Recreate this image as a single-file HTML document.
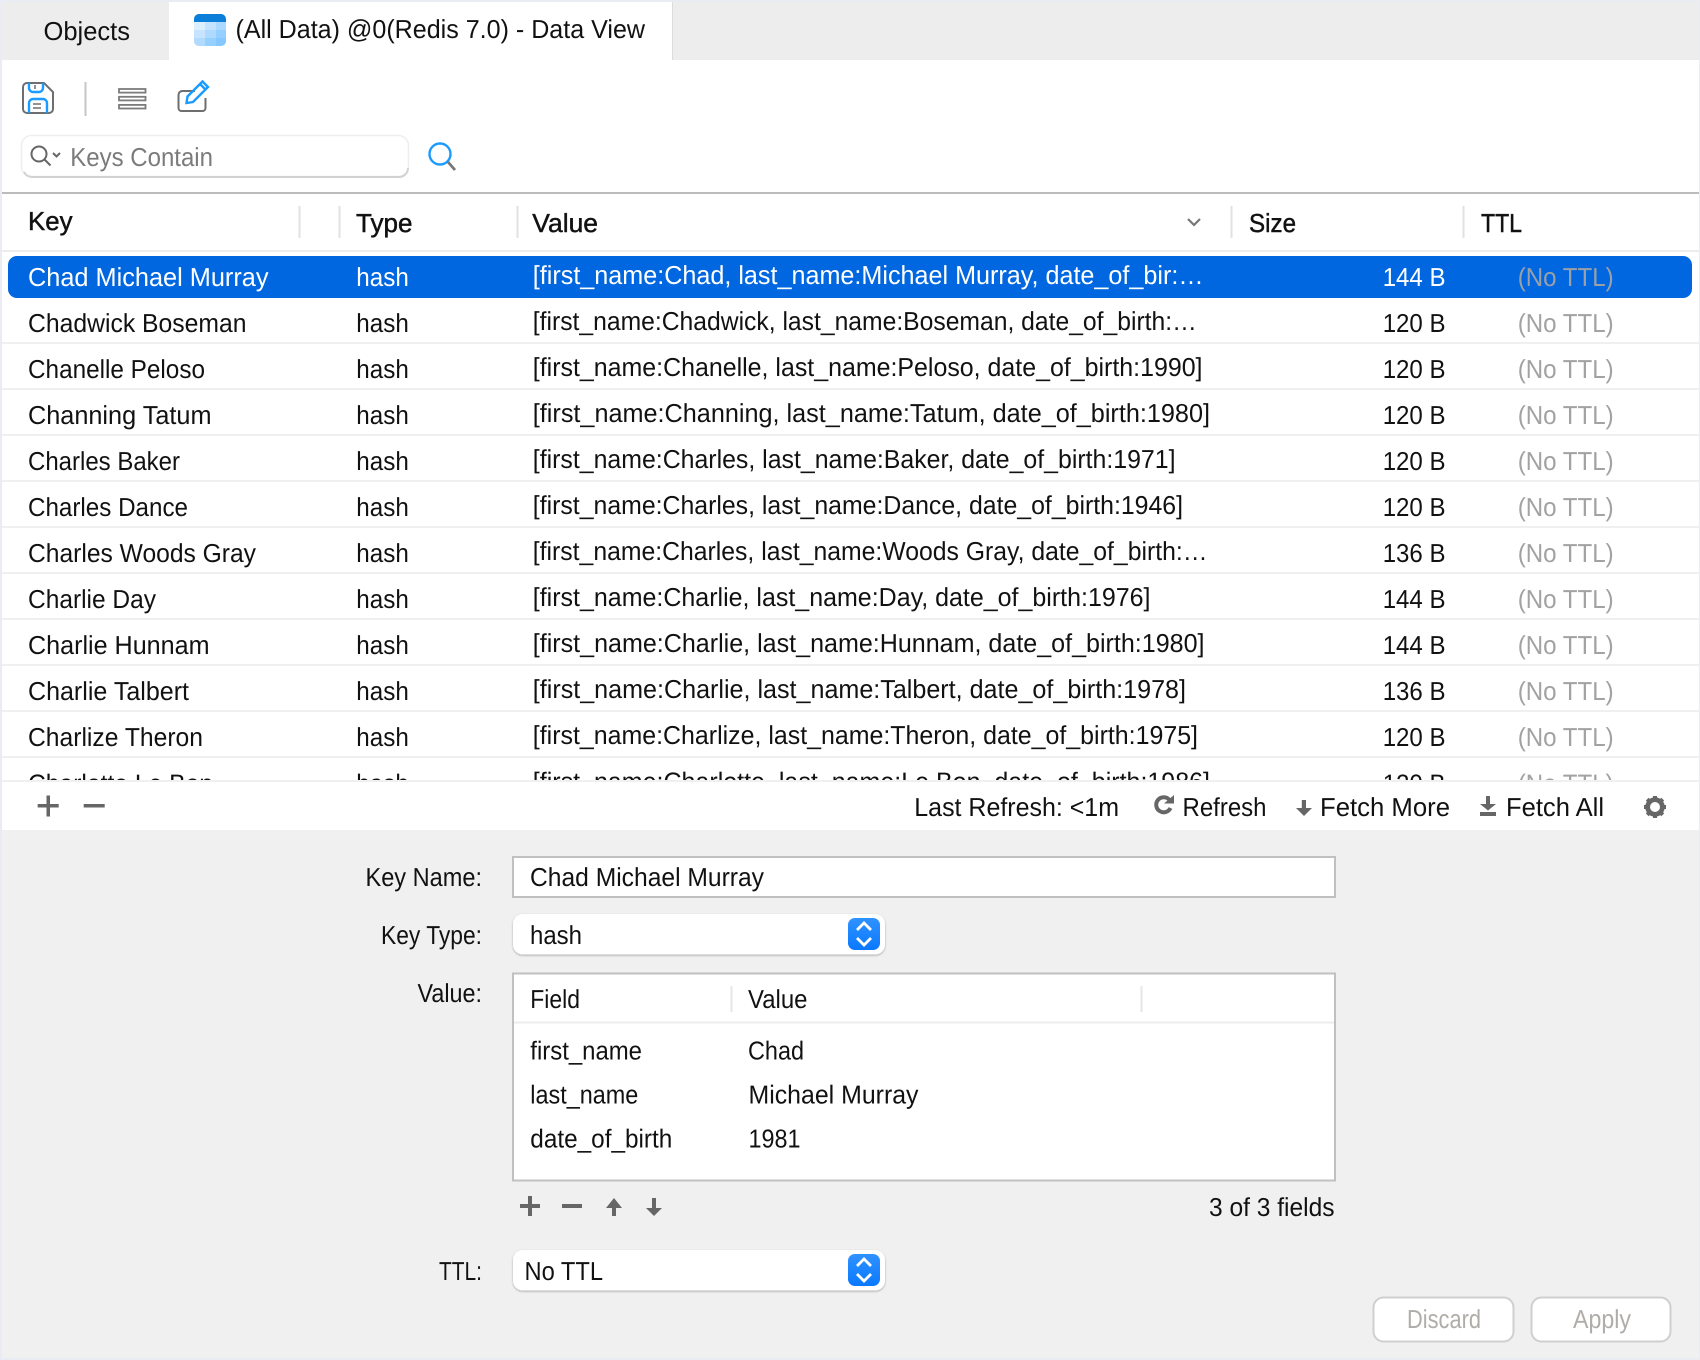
<!DOCTYPE html>
<html lang="en"><head><meta charset="utf-8"><title>Data View</title>
<style>
html,body{margin:0;padding:0;background:#fff;width:1700px;height:1360px;overflow:hidden}
svg{display:block;position:absolute;left:0;top:0}
text{font-family:"Liberation Sans",sans-serif;font-size:26px;fill:#111;white-space:pre;text-rendering:geometricPrecision}
.h{stroke:#111;stroke-width:.45px}
.w{fill:#fff}
.g{fill:#a2a2a2}
.d{fill:#b0aca8}
.i{fill:#666}
.s{fill:none;stroke:#6e6e6e}
.b{fill:none;stroke:#1a9bff}
</style></head><body>
<svg width="1700" height="1360" viewBox="0 0 1700 1360" xmlns="http://www.w3.org/2000/svg">
<defs>
<clipPath id="tb"><rect x="0" y="252" width="1700" height="528"/></clipPath>
<linearGradient id="st" x1="0" y1="0" x2="0" y2="1"><stop offset="0" stop-color="#2f92ff"/><stop offset="1" stop-color="#0a78ff"/></linearGradient>
<filter id="sh" x="-5%" y="-20%" width="110%" height="140%"><feDropShadow dx="0" dy="1" stdDeviation="1" flood-color="#000" flood-opacity=".3"/></filter>
</defs>
<!-- backgrounds -->
<rect width="1700" height="1360" fill="#e9edf3"/>
<rect x="2" y="2" width="1697" height="58" fill="#ededed"/>
<rect x="2" y="60" width="1697" height="770" fill="#fff"/>
<rect x="2" y="830" width="1697" height="528" fill="#f0f0f0"/>
<!-- tabs -->
<rect x="169" y="2" width="503" height="58" fill="#fff"/>
<rect x="672" y="2" width="1" height="58" fill="#dcdcdc"/>
<text x="43.5" y="40" textLength="86.5" lengthAdjust="spacingAndGlyphs">Objects</text>
<g>
<rect x="194" y="14" width="32" height="32" rx="5" fill="#a9d8ff"/>
<path d="M194 22v-3a5 5 0 0 1 5-5h22a5 5 0 0 1 5 5v3z" fill="#0b7fd8"/>
<rect x="194" y="22" width="11" height="8" fill="#dcefff"/><rect x="205" y="22" width="11" height="8" fill="#c4e3ff"/><rect x="216" y="22" width="10" height="8" fill="#acd9ff"/>
<rect x="194" y="30" width="11" height="8" fill="#c6e4ff"/><rect x="205" y="30" width="11" height="8" fill="#aedaff"/><rect x="216" y="30" width="10" height="8" fill="#95cfff"/>
<path d="M194 38h11v8h-6a5 5 0 0 1-5-5z" fill="#b0dbff"/><rect x="205" y="38" width="11" height="8" fill="#96d0ff"/><path d="M216 38h10v3a5 5 0 0 1-5 5h-5z" fill="#84c8ff"/>
</g>
<text x="235.5" y="38" textLength="409.5" lengthAdjust="spacingAndGlyphs">(All Data) @0(Redis 7.0) - Data View</text>
<!-- toolbar -->
<path class="s" stroke-width="2" d="M27 83h17l9 9v17a4 4 0 0 1-4 4H27a4 4 0 0 1-4-4V87a4 4 0 0 1 4-4z"/>
<path class="b" stroke-width="2.4" d="M29 83v5a4 4 0 0 0 4 4h6a4 4 0 0 0 4-4v-5M29 113V103a4 4 0 0 1 4-4h10a4 4 0 0 1 4 4v10"/>
<path class="s" stroke-width="1.5" d="M35 85v4M33 104h8M33 108h8"/>
<rect x="84.5" y="82" width="2" height="34" fill="#c6c6c6"/>
<g fill="none" stroke="#7c7c7c" stroke-width="1.8"><rect x="119" y="89" width="26.5" height="3.6"/><rect x="119" y="96.8" width="26.5" height="3.6"/><rect x="119" y="104.9" width="26.5" height="3.6"/></g>
<path class="s" stroke-width="2" d="M195 91h-13a4 4 0 0 0-3.500 4v13a3 3 0 0 0 3 3h21a3 3 0 0 0 3-3V98"/>
<path class="b" stroke-width="2.4" d="M186.500 103l1-6.500 15-15 5.500 5.500-15 15zM200 84l5.500 5.500"/>
<!-- search -->
<rect x="21.5" y="135.5" width="387" height="41" rx="10" fill="#fff" stroke="#eee" stroke-width="1.5"/>
<path d="M24 172a9 9 0 0 0 8 5h367a9 9 0 0 0 9-9" fill="none" stroke="#d2d2d2" stroke-width="2"/>
<circle cx="39" cy="154" r="7.5" fill="none" stroke="#666" stroke-width="2"/>
<path d="M44.500 159.500l6 6M53 153l3.500 3.500 3.500-3.500" fill="none" stroke="#666" stroke-width="2"/>
<text x="70.3" y="166" textLength="142.7" lengthAdjust="spacingAndGlyphs" style="fill:#7b7b7b">Keys Contain</text>
<circle cx="440" cy="154" r="10.5" class="b" stroke-width="2.4"/>
<path d="M448 162l7 8" stroke="#777" stroke-width="2.8" fill="none"/>
<!-- table header -->
<rect x="2" y="192" width="1697" height="2" fill="#bcbcbc"/>
<g fill="#e2e2e2"><rect x="298.500" y="206" width="2" height="32"/><rect x="338.500" y="206" width="2" height="32"/><rect x="516.500" y="206" width="2" height="32"/><rect x="1230.500" y="206" width="2" height="32"/><rect x="1462.500" y="206" width="2" height="32"/></g>
<rect x="2" y="250" width="1697" height="2" fill="#ececec"/>
<text class="h" x="28" y="230" textLength="44.5" lengthAdjust="spacingAndGlyphs">Key</text>
<text class="h" x="356" y="232" textLength="56.5" lengthAdjust="spacingAndGlyphs">Type</text>
<text class="h" x="532.3" y="232" textLength="65.7" lengthAdjust="spacingAndGlyphs">Value</text>
<text class="h" x="1249" y="232" textLength="47" lengthAdjust="spacingAndGlyphs">Size</text>
<text class="h" x="1481" y="232" textLength="41" lengthAdjust="spacingAndGlyphs">TTL</text>
<path d="M1188 219l6 6 6-6" fill="none" stroke="#777" stroke-width="2.2"/>
<!-- rows -->
<g fill="#f0f0f0"><rect x="2" y="342" width="1697" height="2"/><rect x="2" y="388" width="1697" height="2"/><rect x="2" y="434" width="1697" height="2"/><rect x="2" y="480" width="1697" height="2"/><rect x="2" y="526" width="1697" height="2"/><rect x="2" y="572" width="1697" height="2"/><rect x="2" y="618" width="1697" height="2"/><rect x="2" y="664" width="1697" height="2"/><rect x="2" y="710" width="1697" height="2"/><rect x="2" y="756" width="1697" height="2"/></g>
<rect x="8" y="256" width="1684" height="42" rx="9" fill="#0067e0"/>
<g clip-path="url(#tb)">
<text class="w" x="28" y="286" textLength="240.5" lengthAdjust="spacingAndGlyphs">Chad Michael Murray</text>
<text class="w" x="356.3" y="286" textLength="52.5" lengthAdjust="spacingAndGlyphs">hash</text>
<text class="w" x="532.8" y="284" textLength="670.7" lengthAdjust="spacingAndGlyphs">[first_name:Chad, last_name:Michael Murray, date_of_bir:…</text>
<text class="w" x="1382.7" y="286" textLength="62.8" lengthAdjust="spacingAndGlyphs">144 B</text>
<text x="1517.7" y="286" textLength="96" lengthAdjust="spacingAndGlyphs" style="fill:#9aa0a8">(No TTL)</text>

<text x="28" y="332" textLength="218.5" lengthAdjust="spacingAndGlyphs">Chadwick Boseman</text>
<text x="356.3" y="332" textLength="52.5" lengthAdjust="spacingAndGlyphs">hash</text>
<text x="532.8" y="330" textLength="664" lengthAdjust="spacingAndGlyphs">[first_name:Chadwick, last_name:Boseman, date_of_birth:…</text>
<text x="1382.7" y="332" textLength="62.8" lengthAdjust="spacingAndGlyphs">120 B</text>
<text class="g" x="1517.7" y="332" textLength="96" lengthAdjust="spacingAndGlyphs">(No TTL)</text>

<text x="28" y="378" textLength="177" lengthAdjust="spacingAndGlyphs">Chanelle Peloso</text>
<text x="356.3" y="378" textLength="52.5" lengthAdjust="spacingAndGlyphs">hash</text>
<text x="532.8" y="376" textLength="669.7" lengthAdjust="spacingAndGlyphs">[first_name:Chanelle, last_name:Peloso, date_of_birth:1990]</text>
<text x="1382.7" y="378" textLength="62.8" lengthAdjust="spacingAndGlyphs">120 B</text>
<text class="g" x="1517.7" y="378" textLength="96" lengthAdjust="spacingAndGlyphs">(No TTL)</text>

<text x="28" y="424" textLength="183.500" lengthAdjust="spacingAndGlyphs">Channing Tatum</text>
<text x="356.3" y="424" textLength="52.5" lengthAdjust="spacingAndGlyphs">hash</text>
<text x="532.8" y="422" textLength="677.2" lengthAdjust="spacingAndGlyphs">[first_name:Channing, last_name:Tatum, date_of_birth:1980]</text>
<text x="1382.7" y="424" textLength="62.8" lengthAdjust="spacingAndGlyphs">120 B</text>
<text class="g" x="1517.7" y="424" textLength="96" lengthAdjust="spacingAndGlyphs">(No TTL)</text>

<text x="28" y="470" textLength="152" lengthAdjust="spacingAndGlyphs">Charles Baker</text>
<text x="356.3" y="470" textLength="52.5" lengthAdjust="spacingAndGlyphs">hash</text>
<text x="532.8" y="468" textLength="642.7" lengthAdjust="spacingAndGlyphs">[first_name:Charles, last_name:Baker, date_of_birth:1971]</text>
<text x="1382.7" y="470" textLength="62.8" lengthAdjust="spacingAndGlyphs">120 B</text>
<text class="g" x="1517.7" y="470" textLength="96" lengthAdjust="spacingAndGlyphs">(No TTL)</text>

<text x="28" y="516" textLength="160" lengthAdjust="spacingAndGlyphs">Charles Dance</text>
<text x="356.3" y="516" textLength="52.5" lengthAdjust="spacingAndGlyphs">hash</text>
<text x="532.8" y="514" textLength="650.2" lengthAdjust="spacingAndGlyphs">[first_name:Charles, last_name:Dance, date_of_birth:1946]</text>
<text x="1382.7" y="516" textLength="62.8" lengthAdjust="spacingAndGlyphs">120 B</text>
<text class="g" x="1517.7" y="516" textLength="96" lengthAdjust="spacingAndGlyphs">(No TTL)</text>

<text x="28" y="562" textLength="228" lengthAdjust="spacingAndGlyphs">Charles Woods Gray</text>
<text x="356.3" y="562" textLength="52.5" lengthAdjust="spacingAndGlyphs">hash</text>
<text x="532.8" y="560" textLength="674.7" lengthAdjust="spacingAndGlyphs">[first_name:Charles, last_name:Woods Gray, date_of_birth:…</text>
<text x="1382.7" y="562" textLength="62.8" lengthAdjust="spacingAndGlyphs">136 B</text>
<text class="g" x="1517.7" y="562" textLength="96" lengthAdjust="spacingAndGlyphs">(No TTL)</text>

<text x="28" y="608" textLength="128" lengthAdjust="spacingAndGlyphs">Charlie Day</text>
<text x="356.3" y="608" textLength="52.5" lengthAdjust="spacingAndGlyphs">hash</text>
<text x="532.8" y="606" textLength="617.7" lengthAdjust="spacingAndGlyphs">[first_name:Charlie, last_name:Day, date_of_birth:1976]</text>
<text x="1382.7" y="608" textLength="62.8" lengthAdjust="spacingAndGlyphs">144 B</text>
<text class="g" x="1517.7" y="608" textLength="96" lengthAdjust="spacingAndGlyphs">(No TTL)</text>

<text x="28" y="654" textLength="181.5" lengthAdjust="spacingAndGlyphs">Charlie Hunnam</text>
<text x="356.3" y="654" textLength="52.5" lengthAdjust="spacingAndGlyphs">hash</text>
<text x="532.8" y="652" textLength="671.7" lengthAdjust="spacingAndGlyphs">[first_name:Charlie, last_name:Hunnam, date_of_birth:1980]</text>
<text x="1382.7" y="654" textLength="62.8" lengthAdjust="spacingAndGlyphs">144 B</text>
<text class="g" x="1517.7" y="654" textLength="96" lengthAdjust="spacingAndGlyphs">(No TTL)</text>

<text x="28" y="700" textLength="161" lengthAdjust="spacingAndGlyphs">Charlie Talbert</text>
<text x="356.3" y="700" textLength="52.5" lengthAdjust="spacingAndGlyphs">hash</text>
<text x="532.8" y="698" textLength="653.2" lengthAdjust="spacingAndGlyphs">[first_name:Charlie, last_name:Talbert, date_of_birth:1978]</text>
<text x="1382.7" y="700" textLength="62.8" lengthAdjust="spacingAndGlyphs">136 B</text>
<text class="g" x="1517.7" y="700" textLength="96" lengthAdjust="spacingAndGlyphs">(No TTL)</text>

<text x="28" y="746" textLength="175" lengthAdjust="spacingAndGlyphs">Charlize Theron</text>
<text x="356.3" y="746" textLength="52.5" lengthAdjust="spacingAndGlyphs">hash</text>
<text x="532.8" y="744" textLength="665.2" lengthAdjust="spacingAndGlyphs">[first_name:Charlize, last_name:Theron, date_of_birth:1975]</text>
<text x="1382.7" y="746" textLength="62.8" lengthAdjust="spacingAndGlyphs">120 B</text>
<text class="g" x="1517.7" y="746" textLength="96" lengthAdjust="spacingAndGlyphs">(No TTL)</text>

<text x="28" y="792.5" textLength="185" lengthAdjust="spacingAndGlyphs">Charlotte Le Bon</text>
<text x="356.3" y="792.5" textLength="52.5" lengthAdjust="spacingAndGlyphs">hash</text>
<text x="532.8" y="790.5" textLength="677.2" lengthAdjust="spacingAndGlyphs">[first_name:Charlotte, last_name:Le Bon, date_of_birth:1986]</text>
<text x="1382.7" y="792.5" textLength="62.8" lengthAdjust="spacingAndGlyphs">120 B</text>
<text class="g" x="1517.7" y="792.5" textLength="96" lengthAdjust="spacingAndGlyphs">(No TTL)</text>
</g>
<rect x="2" y="780" width="1697" height="2" fill="#f0f0f0"/>
<!-- bottom toolbar -->
<g class="i"><rect x="37.7" y="804" width="21" height="3.5"/><rect x="46.5" y="795.5" width="3.5" height="21"/><rect x="83.700" y="804" width="21" height="3.5"/></g>
<text x="914.300" y="816" textLength="204.7" lengthAdjust="spacingAndGlyphs">Last Refresh: &lt;1m</text>
<path d="M1169.500 800A7.500 7.500 0 1 0 1170.500 808" fill="none" stroke="#666" stroke-width="4"/>
<path class="i" d="M1164 803.500h10v-8.500z"/>
<text x="1182.5" y="816" textLength="84" lengthAdjust="spacingAndGlyphs">Refresh</text>
<path class="i" d="M1301.800 800h4.200v8h6l-8 8-8-8h5.800z"/>
<text x="1320" y="816" textLength="130" lengthAdjust="spacingAndGlyphs">Fetch More</text>
<path class="i" d="M1486 796h4v8h6l-8 6.500-8-6.500h6zM1480 812h16v4h-16z"/>
<text x="1506" y="816" textLength="98" lengthAdjust="spacingAndGlyphs">Fetch All</text>
<g transform="translate(1655 807)"><circle r="7.5" fill="none" stroke="#666" stroke-width="4.5"/><g class="i"><rect x="-2" y="-11" width="4" height="22"/><rect x="-2" y="-11" width="4" height="22" transform="rotate(45)"/><rect x="-2" y="-11" width="4" height="22" transform="rotate(90)"/><rect x="-2" y="-11" width="4" height="22" transform="rotate(135)"/></g><circle r="5" fill="#fff"/></g>
<!-- form -->
<text x="365.500" y="886" textLength="116.5" lengthAdjust="spacingAndGlyphs">Key Name:</text>
<rect x="513" y="857" width="822" height="40" fill="#fff" stroke="#c0c0c0" stroke-width="2"/>
<text x="530" y="886" textLength="234" lengthAdjust="spacingAndGlyphs">Chad Michael Murray</text>
<text x="381" y="944" textLength="101" lengthAdjust="spacingAndGlyphs">Key Type:</text>
<rect x="513" y="914" width="372" height="40.5" rx="10" fill="#fff" filter="url(#sh)"/>
<text x="530" y="944" textLength="52" lengthAdjust="spacingAndGlyphs">hash</text>
<rect x="848" y="918" width="32" height="32" rx="7" fill="url(#st)"/>
<path d="M857 930l7-7 7 7M857 938l7 7 7-7" fill="none" stroke="#fff" stroke-width="2.8"/>
<text x="417.500" y="1002" textLength="64.5" lengthAdjust="spacingAndGlyphs">Value:</text>
<rect x="513" y="973.5" width="822" height="207" fill="#fff" stroke="#c0c0c0" stroke-width="2"/>
<rect x="514" y="1021.5" width="820" height="2" fill="#ececec"/>
<rect x="730.5" y="986" width="2" height="26" fill="#e6e6e6"/>
<rect x="1140.5" y="986" width="2" height="26" fill="#e6e6e6"/>
<text x="530.3" y="1008" textLength="49.7" lengthAdjust="spacingAndGlyphs">Field</text>
<text x="748" y="1008" textLength="59.5" lengthAdjust="spacingAndGlyphs">Value</text>
<text x="530.3" y="1059.5" textLength="111.7" lengthAdjust="spacingAndGlyphs">first_name</text>
<text x="748" y="1059.5" textLength="56" lengthAdjust="spacingAndGlyphs">Chad</text>
<text x="530.3" y="1103.5" textLength="108" lengthAdjust="spacingAndGlyphs">last_name</text>
<text x="748.5" y="1103.5" textLength="170" lengthAdjust="spacingAndGlyphs">Michael Murray</text>
<text x="530.3" y="1147.5" textLength="142" lengthAdjust="spacingAndGlyphs">date_of_birth</text>
<text x="748.5" y="1147.5" textLength="52" lengthAdjust="spacingAndGlyphs">1981</text>
<g class="i"><rect x="520" y="1204" width="20" height="4"/><rect x="528" y="1196" width="4" height="20"/><rect x="562" y="1204" width="20" height="4"/>
<path d="M614 1198l8 10h-6v8h-4v-8h-6zM652 1198h4v10h6l-8 8-8-8h6z"/></g>
<text x="1209" y="1216" textLength="125.5" lengthAdjust="spacingAndGlyphs">3 of 3 fields</text>
<text x="439" y="1280" textLength="43" lengthAdjust="spacingAndGlyphs">TTL:</text>
<rect x="513" y="1250" width="372" height="40.5" rx="10" fill="#fff" filter="url(#sh)"/>
<text x="524.500" y="1280" textLength="78.5" lengthAdjust="spacingAndGlyphs">No TTL</text>
<rect x="848" y="1254" width="32" height="32" rx="7" fill="url(#st)"/>
<path d="M857 1266l7-7 7 7M857 1274l7 7 7-7" fill="none" stroke="#fff" stroke-width="2.8"/>
<!-- buttons -->
<rect x="1373.5" y="1297.5" width="140" height="44" rx="10" fill="#fff" stroke="#cfcfcf" stroke-width="2"/>
<text class="d" x="1407" y="1328" textLength="74" lengthAdjust="spacingAndGlyphs">Discard</text>
<rect x="1531.5" y="1297.5" width="139" height="44" rx="10" fill="#fff" stroke="#cfcfcf" stroke-width="2"/>
<text class="d" x="1573" y="1328" textLength="58" lengthAdjust="spacingAndGlyphs">Apply</text>
</svg>
</body></html>
